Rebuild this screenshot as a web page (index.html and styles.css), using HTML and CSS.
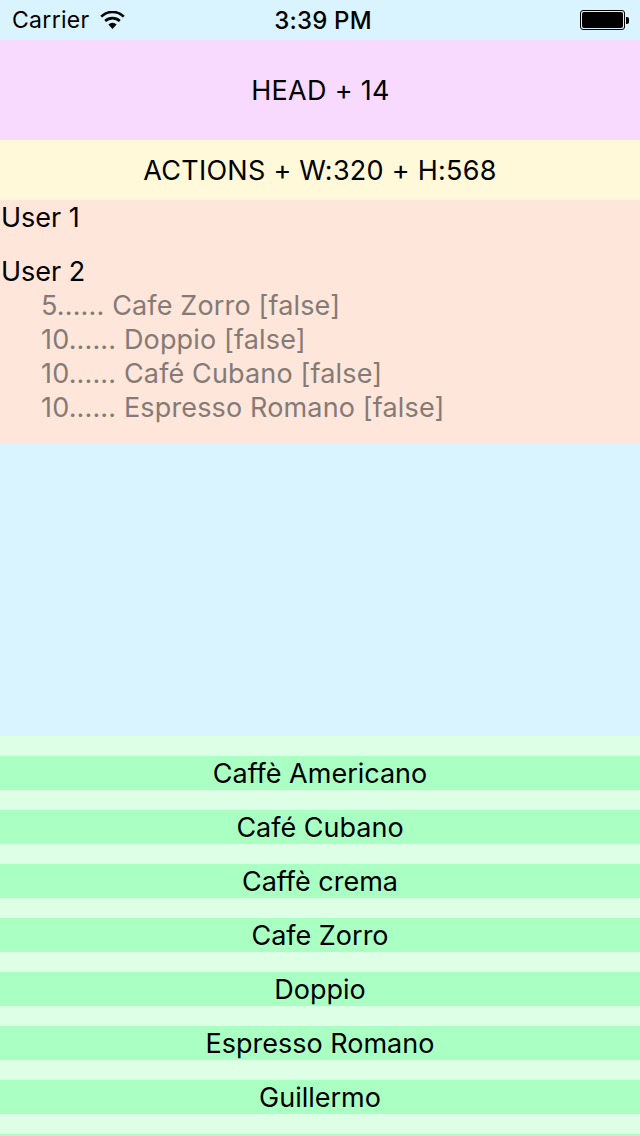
FILE: index.html
```html
<!DOCTYPE html>
<html lang="en">
<head>
    <meta charset="UTF-8">
    <title>Coffee Orders</title>
    <link rel="stylesheet" href="styles.css">
</head>
<body>
    <div class="status-bar">
        <div class="status-left">
            <span class="carrier">Carrier</span>
            <svg class="wifi" width="25" height="18" viewBox="0 0 25 18">
                <path d="M12.5 18 L8.4 13.4 A6.2 6.2 0 0 1 16.6 13.4 Z" fill="#000"/>
                <path d="M5.2 10 A10.6 10.6 0 0 1 19.8 10" fill="none" stroke="#000" stroke-width="2.6"/>
                <path d="M1.2 5.6 A16 16 0 0 1 23.8 5.6" fill="none" stroke="#000" stroke-width="2.6"/>
            </svg>
        </div>
        <span class="clock">3:39 PM</span>
        <div class="battery">
            <div class="battery-body"><div class="battery-fill"></div></div>
            <div class="battery-tip"></div>
        </div>
    </div>

    <div class="head">HEAD + 14</div>
    <div class="actions">ACTIONS + W:320 + H:568</div>

    <div class="users">
        <div class="user">User 1</div>
        <div class="user">User 2
            <div class="order">5...... Cafe Zorro [false]</div>
            <div class="order">10...... Doppio [false]</div>
            <div class="order">10...... Café Cubano [false]</div>
            <div class="order">10...... Espresso Romano [false]</div>
        </div>
    </div>

    <div class="spacer"></div>

    <div class="menu">
        <div class="menu-item">Caffè Americano</div>
        <div class="menu-item">Café Cubano</div>
        <div class="menu-item">Caffè crema</div>
        <div class="menu-item">Cafe Zorro</div>
        <div class="menu-item">Doppio</div>
        <div class="menu-item">Espresso Romano</div>
        <div class="menu-item">Guillermo</div>
        <div class="menu-item"></div>
    </div>
</body>
</html>
```

FILE: styles.css
```css
html, body {
    margin: 0;
    height: 1136px;
    overflow: hidden;
}

body {
    background-color: #d9f4ff;
    color: #000;
    font-family: Inter, "Noto Sans", sans-serif;
    font-size: 27px;
}

.status-bar {
    height: 40px;
    display: flex;
    align-items: center;
    justify-content: space-between;
    padding: 0 11px 0 12px;
    position: relative;
}

.status-left {
    display: flex;
    align-items: center;
    gap: 10px;
}

.carrier {
    font-size: 23px;
    letter-spacing: 0.3px;
}

.clock {
    font-size: 24px;
    font-weight: 500;
    letter-spacing: 0.2px;
    position: absolute;
    left: 6px;
    right: 0;
    text-align: center;
}

.battery {
    display: flex;
    align-items: center;
}

.battery-body {
    width: 41px;
    height: 16px;
    border: 1px solid #000;
    border-radius: 3px;
    padding: 1px;
}

.battery-fill {
    height: 100%;
    background-color: #000;
    border-radius: 2px;
}

.battery-tip {
    width: 3px;
    height: 7px;
    margin-left: 1px;
    background-color: #000;
    border-radius: 0 2px 2px 0;
}

.head {
    height: 100px;
    padding: 1px 0 0 1px;
    box-sizing: border-box;
    background-color: #f8daff;
    letter-spacing: 0.3px;
    display: flex;
    align-items: center;
    justify-content: center;
}

.actions {
    height: 60px;
    padding-top: 1px;
    box-sizing: border-box;
    background-color: #fff8d9;
    letter-spacing: 0.26px;
    display: flex;
    align-items: center;
    justify-content: center;
}

.users {
    height: 244px;
    background-color: #ffe6da;
    padding: 1px 0 0 1px;
    box-sizing: border-box;
}

.user {
    line-height: 34px;
    margin-bottom: 20px;
}

.order {
    margin-left: 40px;
    color: #857a75;
    letter-spacing: 0.15px;
}

.spacer {
    height: 292px;
}

.menu {
    background-color: #dcffe6;
    padding-top: 20px;
    display: flex;
    flex-direction: column;
    gap: 20px;
}

.menu-item {
    height: 34px;
    line-height: 36px;
    text-align: center;
    background-color: #aaffc3;
}
```
